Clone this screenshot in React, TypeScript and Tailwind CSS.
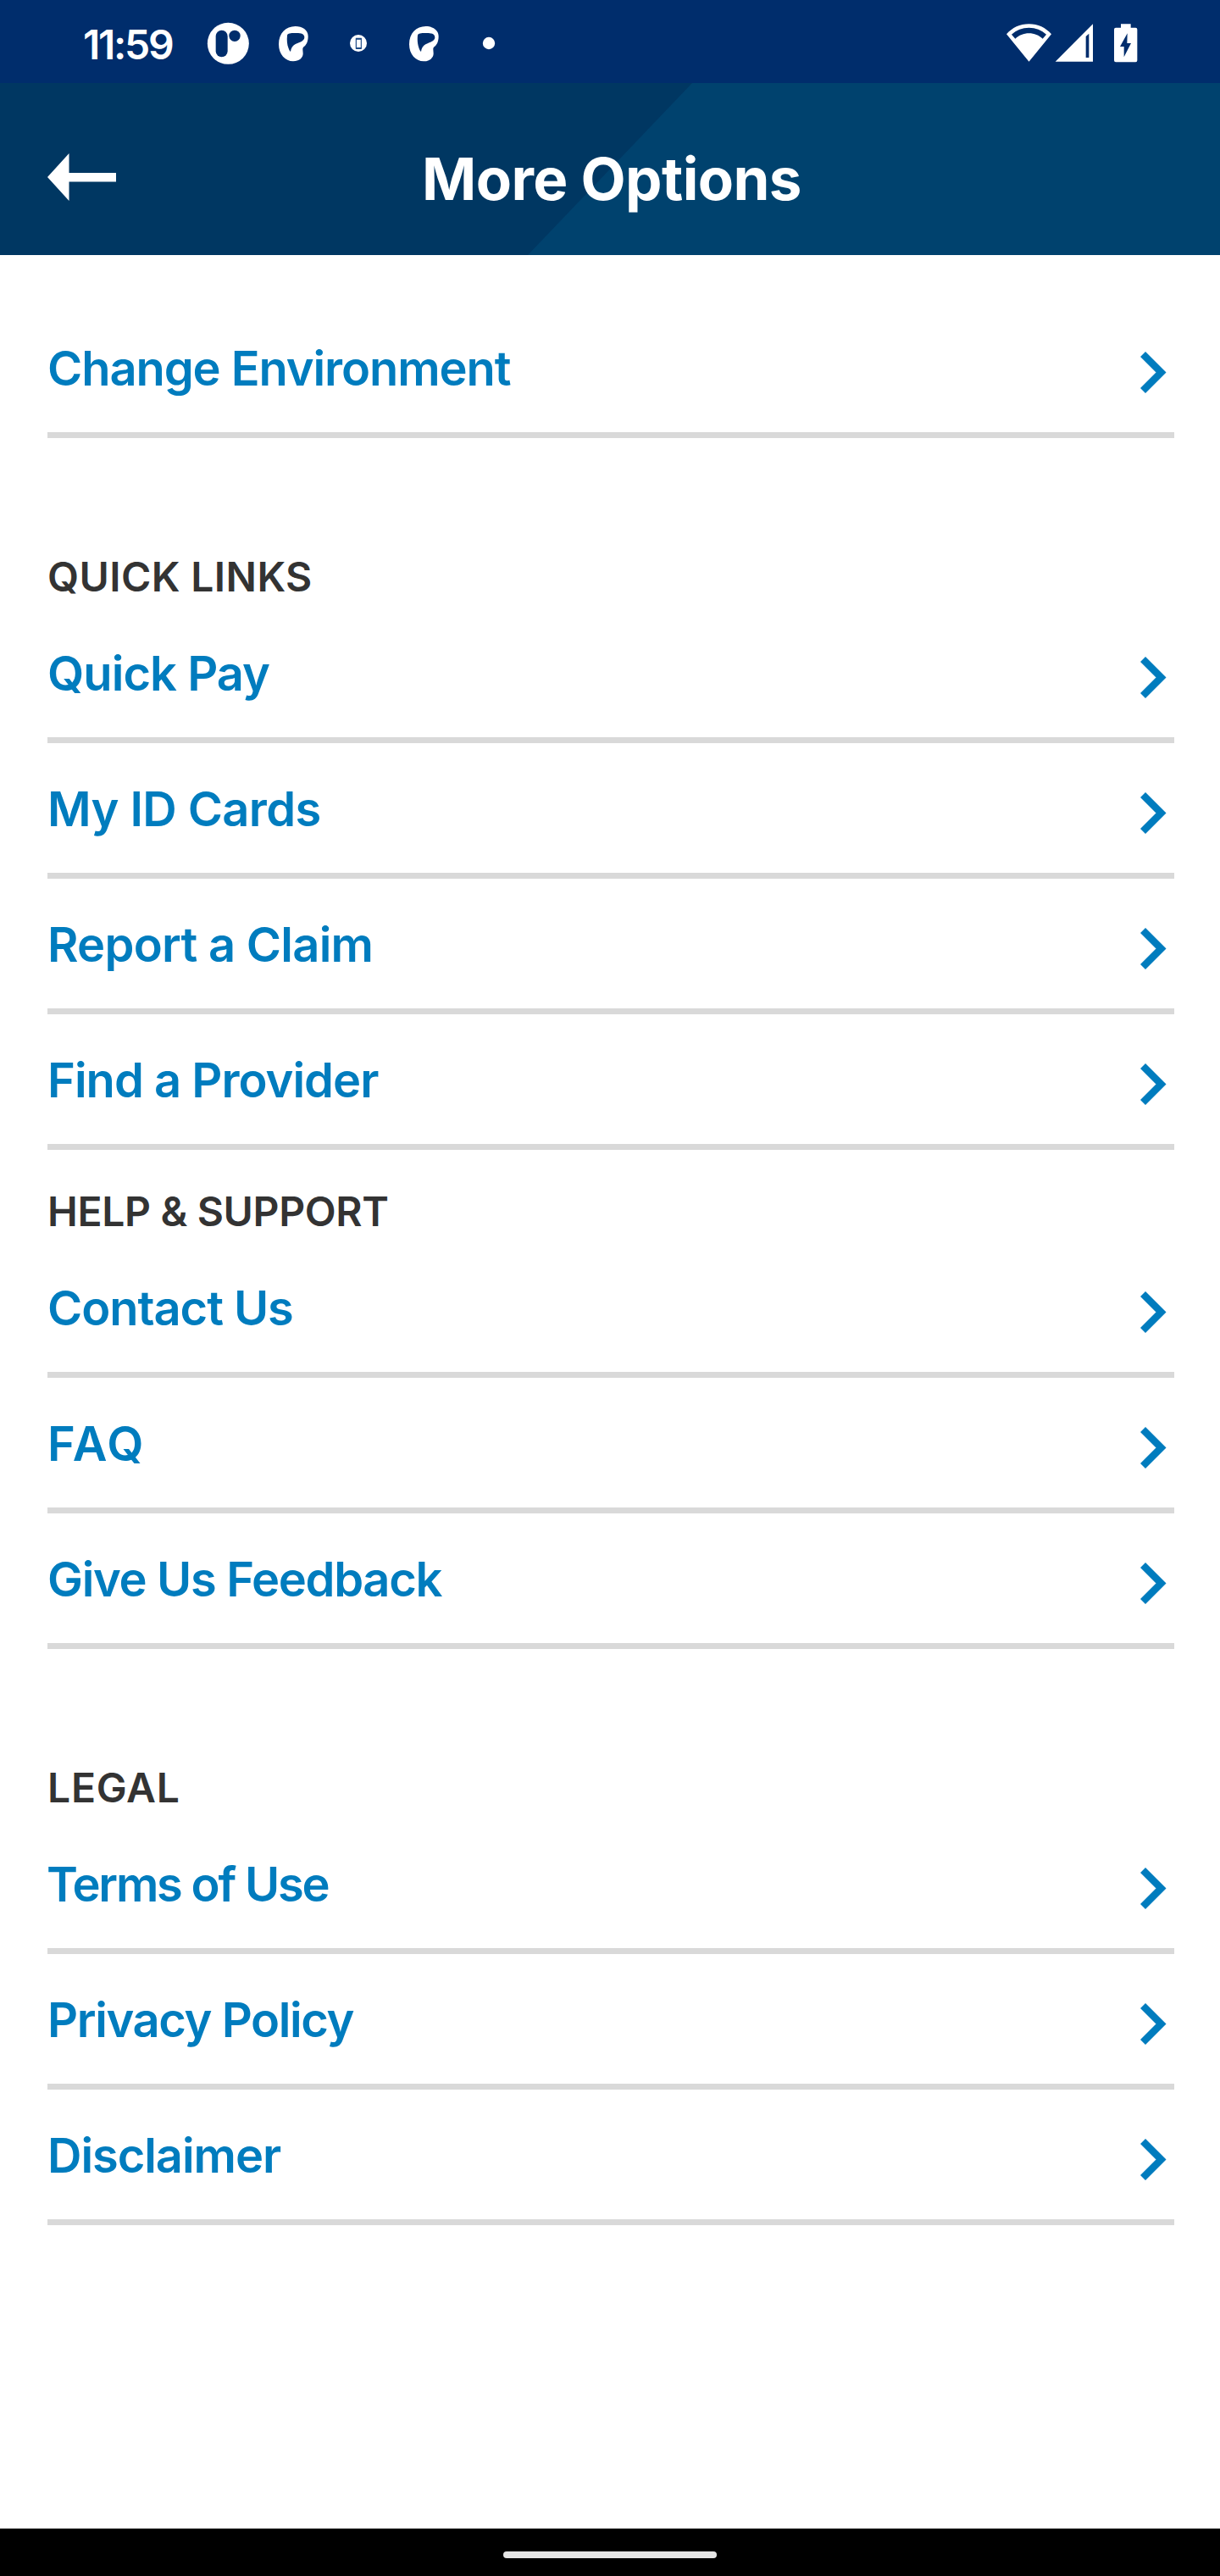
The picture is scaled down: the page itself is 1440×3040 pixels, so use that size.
type Item = { label: string; spacing: string };

const environment: Item = { label: "Change Environment", spacing: "tracking-[-1.08px]" };

const quickLinks: Item[] = [
  { label: "Quick Pay", spacing: "tracking-[-0.95px]" },
  { label: "My ID Cards", spacing: "tracking-[-0.6px]" },
  { label: "Report a Claim", spacing: "tracking-[-0.73px]" },
  { label: "Find a Provider", spacing: "tracking-[-0.98px]" },
];

const support: Item[] = [
  { label: "Contact Us", spacing: "tracking-[-1.05px]" },
  { label: "FAQ", spacing: "tracking-[2px]" },
  { label: "Give Us Feedback", spacing: "tracking-[-1.32px]" },
];

const legal: Item[] = [
  { label: "Terms of Use", spacing: "tracking-[-2.2px] -ml-px" },
  { label: "Privacy Policy", spacing: "tracking-[-1.38px]" },
  { label: "Disclaimer", spacing: "tracking-[-1.06px]" },
];

function SwirlIcon({ className }: { className: string }) {
  return (
    <svg className={className} width="38" height="98" viewBox="24 0 114 294" fill="white">
      <path
        fillRule="evenodd"
        d="M86 93C110 93 131 106 131 128C131 148 124 160 114 167C110 171 113 180 113 190C113 205 99 217 78 217C50 217 27 193 27 157C27 118 52 93 86 93ZM57 125C55 142 57 158 61 169C63 176 66 181 69 183C70 172 76 162 85 157C97 150 118 147 118 132C118 121 107 117 90 117C76 117 59 116 57 125Z"
      />
    </svg>
  );
}

function StatusBar() {
  return (
    <div className="flex h-[98px] items-center bg-[#002d6c] pr-[96px] pl-[98px] text-white">
      <div className="w-[146px] pt-2 text-[48px] leading-[60px] font-semibold tracking-[-2.3px]">11:59</div>
      <svg width="50" height="98" viewBox="492 0 150 294">
        <circle cx="568" cy="154" r="73.500" fill="white" />
        <rect x="524" y="107" width="42" height="95" rx="21" fill="#002d6c" />
        <circle cx="591" cy="127" r="20" fill="#002d6c" />
      </svg>
      <SwirlIcon className="ml-[34px]" />
      <svg className="ml-[46px]" width="22" height="98" viewBox="276 0 66 294">
        <circle cx="309" cy="153" r="30" fill="white" />
        <rect x="301" y="137" width="18" height="34" fill="none" stroke="#1d4a86" strokeWidth="3.500" />
        <path d="M300 137h20M300 171h20" stroke="#1d4a86" strokeWidth="6" />
      </svg>
      <SwirlIcon className="ml-[48px]" />
      <svg className="ml-[49px]" width="16" height="98" viewBox="747 0 48 294">
        <circle cx="771" cy="153" r="21.500" fill="white" />
      </svg>
      <svg className="ml-auto" width="56" height="98" viewBox="78 0 168 294">
        <path
          fillRule="evenodd"
          fill="white"
          d="M84 121C104 98 132 85 163.500 85S223 98 243 121L163.500 218ZM102 122L115 137C128 125 145 118 163.500 118S199 125 212 137L225 122C208 106 187 98 163.500 98S119 106 102 122Z"
        />
      </svg>
      <svg className="ml-[2px]" width="48" height="98" viewBox="252 0 144 294">
        <path fillRule="evenodd" fill="white" d="M257 218L390 85V218ZM365 129V204H376V119Z" />
      </svg>
      <svg className="ml-[22px]" width="30" height="98" viewBox="462 0 90 294">
        <path
          fill="white"
          d="M489 85H524V98H541Q547 98 547 104V214Q547 220 541 220H471Q465 220 465 214V104Q465 98 471 98H489Z"
        />
        <path fill="#002d6c" d="M512 118L486 165H500V202L525 153H511Z" />
      </svg>
    </div>
  );
}

function Header() {
  return (
    <header className="relative h-[203px] bg-[#003762]">
      <div className="absolute inset-0 bg-[#00426e] [clip-path:polygon(817px_0,100%_0,100%_100%,623px_100%)]" />
      <div className="relative flex h-full items-center pt-[23px] pr-[133px] pl-[56px]">
        <svg className="-mt-1 shrink-0" width="81" height="58" viewBox="0 0 81 58" fill="white">
          <path d="M0 29L25.500 1V24H81V34.500H25.500V57Z" />
        </svg>
        <h1 className="flex-1 text-center text-[69px] leading-[84px] font-bold tracking-[-0.6px] text-white">
          More Options
        </h1>
      </div>
    </header>
  );
}

function Row({ item }: { item: Item }) {
  return (
    <li className="flex h-[160px] items-center justify-between border-b-[7px] border-[#d9d9d9] pr-[9px]">
      <span className={"pt-[2px] text-[56px] leading-[68px] font-semibold text-[#007cbe] " + item.spacing}>
        {item.label}
      </span>
      <svg className="mt-3" width="31" height="49" viewBox="0 0 31 49" fill="none">
        <path d="M3 3L24.500 24.500L3 46" stroke="#007cbe" strokeWidth="8.500" />
      </svg>
    </li>
  );
}

function Section({ title, titleClass, items }: { title: string; titleClass: string; items: Item[] }) {
  return (
    <section>
      <h2 className={"mb-[6px] text-[48px] leading-[60px] font-semibold text-[#333333] " + titleClass}>{title}</h2>
      <ul>
        {items.map((item) => (
          <Row key={item.label} item={item} />
        ))}
      </ul>
    </section>
  );
}

export default function App() {
  return (
    <div className="flex h-[3040px] w-[1440px] flex-col overflow-hidden bg-white font-['Inter',sans-serif]">
      <StatusBar />
      <Header />
      <main className="flex-1 pt-[56px] pr-[54px] pl-[56px]">
        <ul>
          <Row item={environment} />
        </ul>
        <Section title="QUICK LINKS" titleClass="pt-[134px] tracking-[0.4px]" items={quickLinks} />
        <Section title="HELP & SUPPORT" titleClass="pt-[43px] tracking-[-0.33px]" items={support} />
        <Section title="LEGAL" titleClass="pt-[134px] tracking-[0.75px]" items={legal} />
      </main>
      <footer className="flex h-[56px] justify-center bg-black pt-[27px]">
        <div className="h-2 w-[252px] rounded-full bg-[#e6e6e6]" />
      </footer>
    </div>
  );
}
